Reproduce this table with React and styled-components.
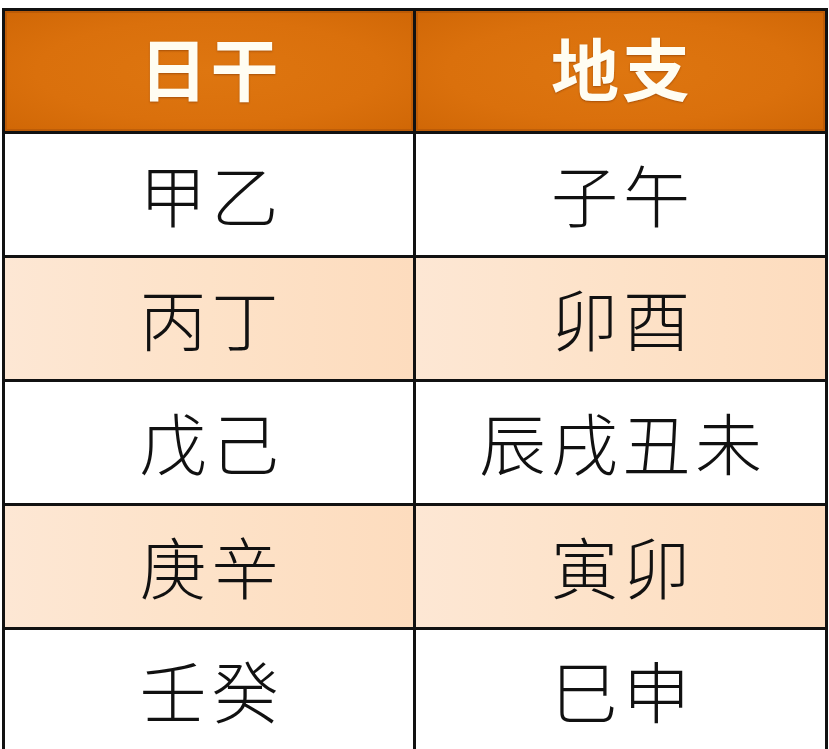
import React from "react";
import styled, { createGlobalStyle } from "styled-components";

const Global = createGlobalStyle`
  html, body {
    margin: 0;
    padding: 0;
    background: #ffffff;
    overflow: hidden;
  }
  body {
    font-family: "Noto Sans CJK SC", "Noto Sans", sans-serif;
  }
`;

const Page = styled.div`
  width: 829px;
  height: 749px;
  box-sizing: border-box;
  padding: 8px 1px 0 2px;
  overflow: hidden;
  background: #ffffff;
`;

const Table = styled.div`
  display: grid;
  grid-template-columns: 408px 409px;
  grid-template-rows: 120px repeat(5, 121px);
  gap: 3px;
  padding: 3px;
  background: #111111;
  width: max-content;
`;

const HeadCell = styled.div`
  display: flex;
  align-items: center;
  justify-content: center;
  background: radial-gradient(ellipse at 50% 50%, #de7610 0%, #da700c 60%, #d06706 100%);
  box-shadow: inset 0 0 0 2px rgba(150, 70, 10, 0.35);
  color: #fffdf2;
  font-family: "Noto Sans CJK SC", sans-serif;
  font-weight: 700;
  font-size: 68px;
  line-height: 1;
  letter-spacing: 3px;
  text-shadow: 0 1px 2px rgba(90, 30, 0, 0.4);
  padding-bottom: 8px;
  padding-left: 3px;
`;

const Cell = styled.div`
  display: flex;
  align-items: center;
  justify-content: center;
  background: ${(p) =>
    p.$shaded
      ? "linear-gradient(90deg, #fde7d4 0%, #fde2c8 50%, #fddcbe 100%)"
      : "#ffffff"};
  color: #111111;
  font-family: "Noto Sans CJK SC", sans-serif;
  font-weight: 300;
  font-size: 67px;
  letter-spacing: 5px;
  line-height: 1;
  padding-bottom: 5px;
  padding-left: 5px;
`;

const rows = [
  ["甲乙", "子午"],
  ["丙丁", "卯酉"],
  ["戊己", "辰戌丑未"],
  ["庚辛", "寅卯"],
  ["壬癸", "巳申"],
];

export default function App() {
  return (
    <Page>
      <Global />
      <Table>
        <HeadCell>日干</HeadCell>
        <HeadCell>地支</HeadCell>
        {rows.map(([a, b], i) => (
          <React.Fragment key={i}>
            <Cell $shaded={i % 2 === 1}>{a}</Cell>
            <Cell $shaded={i % 2 === 1}>{b}</Cell>
          </React.Fragment>
        ))}
      </Table>
    </Page>
  );
}
